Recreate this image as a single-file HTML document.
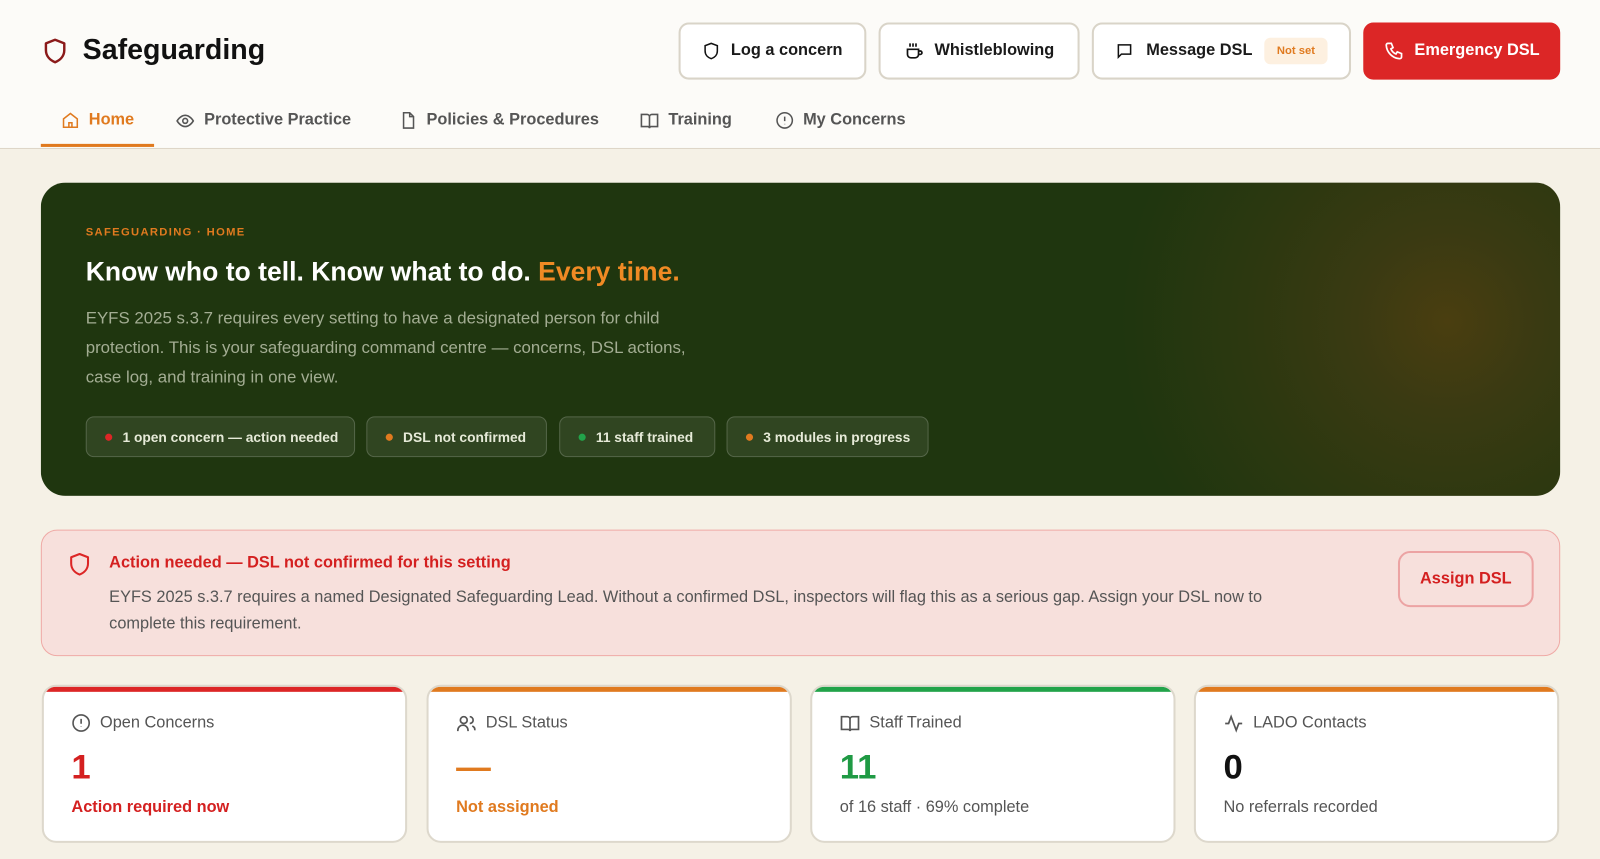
<!DOCTYPE html>
<html><head><meta charset="utf-8"><style>
*{box-sizing:border-box;margin:0;padding:0}
body{width:1600px;height:859px;overflow:hidden;background:#f5f1e6;font-family:"Liberation Sans",sans-serif;color:#1a1a1a;position:relative}
#w{position:absolute;left:0;top:0;width:1568px;height:842px;transform:scale(1.02041);transform-origin:0 0}
.hdr{position:absolute;left:0;top:0;width:1568px;height:146px;background:#fcfbf8;border-bottom:1px solid #ddd6c8}
.abs{position:absolute}
svg{display:block}
.btn{position:absolute;top:22px;height:56px;border:2px solid #d9d4c8;border-radius:10px;background:#fff;display:flex;align-items:center;justify-content:center;gap:10px;font-weight:bold;font-size:16px}
.nav{position:absolute;top:108px;height:20px;display:flex;align-items:center;gap:9px;font-weight:bold;font-size:16px;color:#555}
.pill{position:absolute;top:408px;height:40px;border:1px solid rgba(255,255,255,.18);background:rgba(255,255,255,.08);border-radius:8px;color:#e6ead8;font-weight:bold;font-size:13.5px;display:flex;align-items:center;padding-left:18px;gap:10px}
.dot{width:7px;height:7px;border-radius:50%}
.card{position:absolute;top:671px;width:358px;height:155px;background:#fff;border:2px solid #ddd8cc;border-radius:14px;overflow:hidden}
.card .bar{height:5px}
.card .lbl{position:absolute;left:27px;top:26px;display:flex;align-items:center;gap:9px;font-size:16px;color:#555}
.card .num{position:absolute;left:27px;top:60px;font-size:34px;font-weight:bold}
.card .sub{position:absolute;left:27px;top:110px;font-size:16px}
</style></head><body><div id="w">
<div class="hdr"></div>
<svg class="abs" style="left:42px;top:37px" width="24" height="26" viewBox="0 0 24 26"><path d="M12 2 L21 5.5 V12 C21 18 17 22 12 24 C7 22 3 18 3 12 V5.5 Z" fill="none" stroke="#8b1a1a" stroke-width="2.4" stroke-linejoin="round"/></svg>
<div class="abs" style="left:81px;top:33px;font-size:28px;font-weight:bold;color:#111">Safeguarding</div>

<div class="btn" style="left:665px;width:184px"><svg width="18" height="18" viewBox="0 0 24 24" fill="none" stroke="#111" stroke-width="2"><path d="M12 2l8 3v7c0 5-3.5 8.5-8 10-4.5-1.5-8-5-8-10V5z"/></svg>Log a concern</div>
<div class="btn" style="left:861px;width:197px"><svg width="20" height="20" viewBox="0 0 24 24" fill="none" stroke="#111" stroke-width="2"><path d="M4 10h13v6a4 4 0 0 1-4 4H8a4 4 0 0 1-4-4z"/><path d="M17 12h2a2 2 0 0 1 0 4h-2"/><path d="M7 3v4M10.5 3v4M14 3v4"/></svg>Whistleblowing</div>
<div class="btn" style="left:1070px;width:254px;gap:12px"><svg width="18" height="18" viewBox="0 0 24 24" fill="none" stroke="#111" stroke-width="2"><path d="M4 4h16v12H8l-4 4z"/></svg>Message DSL<span style="background:#fdf0e0;color:#e07a1f;font-size:11px;padding:7px 12px;border-radius:6px">Not set</span></div>
<div class="btn" style="left:1336px;width:193px;background:#dc2626;border-color:#dc2626;color:#fff"><svg width="20" height="20" viewBox="0 0 24 24" fill="none" stroke="#fff" stroke-width="2"><path d="M5 3h4l2 5-2.5 1.5a11 11 0 0 0 6 6L16 13l5 2v4a2 2 0 0 1-2 2A17 17 0 0 1 3 5a2 2 0 0 1 2-2z"/></svg>Emergency DSL</div>

<div class="nav" style="left:60px;color:#e07a1f"><svg width="18" height="18" viewBox="0 0 24 24" fill="none" stroke="#e07a1f" stroke-width="2"><path d="M3 10l9-7 9 7v11H3z"/><path d="M10 21v-6h4v6"/></svg>Home</div>
<div class="abs" style="left:40px;top:141px;width:111px;height:3px;background:#e07a1f"></div>
<div class="nav" style="left:172px"><svg width="19" height="19" viewBox="0 0 24 24" fill="none" stroke="#555" stroke-width="2"><path d="M2 12s4-7 10-7 10 7 10 7-4 7-10 7S2 12 2 12z"/><circle cx="12" cy="12" r="3"/></svg>Protective Practice</div>
<div class="nav" style="left:391px"><svg width="18" height="18" viewBox="0 0 24 24" fill="none" stroke="#555" stroke-width="2"><path d="M6 2h8l5 5v15H6z"/><path d="M14 2v5h5"/></svg>Policies &amp; Procedures</div>
<div class="nav" style="left:627px"><svg width="19" height="19" viewBox="0 0 24 24" fill="none" stroke="#555" stroke-width="2"><path d="M2 4h7a3 3 0 0 1 3 3v14a2 2 0 0 0-2-2H2zM22 4h-7a3 3 0 0 0-3 3v14a2 2 0 0 1 2-2h8z"/></svg>Training</div>
<div class="nav" style="left:760px"><svg width="18" height="18" viewBox="0 0 24 24" fill="none" stroke="#555" stroke-width="2"><circle cx="12" cy="12" r="10"/><path d="M12 7v6M12 16.5v.5"/></svg>My Concerns</div>

<div class="abs" style="left:40px;top:179px;width:1489px;height:307px;border-radius:24px;background:radial-gradient(circle at 1378px 136px,#4a3e10 0,#3a3a12 90px,#2c3810 200px,rgba(31,54,14,0) 320px),#1f360f;overflow:hidden">
<div class="abs" style="left:44px;top:43px;font-size:11px;font-weight:bold;letter-spacing:1.3px;color:#e07a1f">SAFEGUARDING · HOME</div>
<div class="abs" style="left:44px;top:72px;font-size:26px;font-weight:bold;color:#fff">Know who to tell. Know what to do. <span style="color:#f08a24">Every time.</span></div>
<div class="abs" style="left:44px;top:119px;width:615px;font-size:16.5px;line-height:29px;color:#a3ad93">EYFS 2025 s.3.7 requires every setting to have a designated person for child protection. This is your safeguarding command centre — concerns, DSL actions, case log, and training in one view.</div>
</div>
<div class="pill" style="left:84px;width:264px"><span class="dot" style="background:#dc2626"></span>1 open concern — action needed</div>
<div class="pill" style="left:359px;width:177px"><span class="dot" style="background:#e07a1f"></span>DSL not confirmed</div>
<div class="pill" style="left:548px;width:153px"><span class="dot" style="background:#22a34a"></span>11 staff trained</div>
<div class="pill" style="left:712px;width:198px"><span class="dot" style="background:#e07a1f"></span>3 modules in progress</div>

<div class="abs" style="left:40px;top:519px;width:1489px;height:124px;background:#f7e0dc;border:1.5px solid #efaaa6;border-radius:16px"></div>
<svg class="abs" style="left:67px;top:541px" width="22" height="24" viewBox="0 0 24 26"><path d="M12 2 L21 5.5 V12 C21 18 17 22 12 24 C7 22 3 18 3 12 V5.5 Z" fill="none" stroke="#dc2626" stroke-width="2.2" stroke-linejoin="round"/></svg>
<div class="abs" style="left:107px;top:543px;font-size:16px;font-weight:bold;color:#d42020">Action needed — DSL not confirmed for this setting</div>
<div class="abs" style="left:107px;top:573px;width:1190px;font-size:16px;line-height:26px;color:#555">EYFS 2025 s.3.7 requires a named Designated Safeguarding Lead. Without a confirmed DSL, inspectors will flag this as a serious gap. Assign your DSL now to complete this requirement.</div>
<div class="abs" style="left:1370px;top:540px;width:133px;height:55px;border:2px solid #eca3a3;border-radius:12px;display:flex;align-items:center;justify-content:center;font-weight:bold;font-size:16px;color:#d42020">Assign DSL</div>

<div class="card" style="left:41px"><div class="bar" style="background:#dc2626"></div><div class="lbl"><svg width="19" height="19" viewBox="0 0 24 24" fill="none" stroke="#555" stroke-width="2"><circle cx="12" cy="12" r="10"/><path d="M12 7v6M12 16.5v.5"/></svg>Open Concerns</div><div class="num" style="color:#d42020">1</div><div class="sub" style="color:#d42020;font-weight:bold">Action required now</div></div>
<div class="card" style="left:418px"><div class="bar" style="background:#e07a1f"></div><div class="lbl"><svg width="20" height="20" viewBox="0 0 24 24" fill="none" stroke="#555" stroke-width="2"><circle cx="9" cy="8" r="4"/><path d="M2 21v-1a6 6 0 0 1 12 0v1M16 4a4 4 0 0 1 0 8M19 15a5 5 0 0 1 3 5"/></svg>DSL Status</div><div class="num" style="color:#e07a1f">—</div><div class="sub" style="color:#e07a1f;font-weight:bold">Not assigned</div></div>
<div class="card" style="left:794px"><div class="bar" style="background:#22a34a"></div><div class="lbl"><svg width="20" height="20" viewBox="0 0 24 24" fill="none" stroke="#555" stroke-width="2"><path d="M2 4h7a3 3 0 0 1 3 3v14a2 2 0 0 0-2-2H2zM22 4h-7a3 3 0 0 0-3 3v14a2 2 0 0 1 2-2h8z"/></svg>Staff Trained</div><div class="num" style="color:#1f9a44">11</div><div class="sub" style="color:#555">of 16 staff · 69% complete</div></div>
<div class="card" style="left:1170px"><div class="bar" style="background:#e07a1f"></div><div class="lbl"><svg width="20" height="20" viewBox="0 0 24 24" fill="none" stroke="#555" stroke-width="2"><path d="M2 12h4l3-8 6 16 3-8h4"/></svg>LADO Contacts</div><div class="num" style="color:#111">0</div><div class="sub" style="color:#555">No referrals recorded</div></div>
</div></body></html>
